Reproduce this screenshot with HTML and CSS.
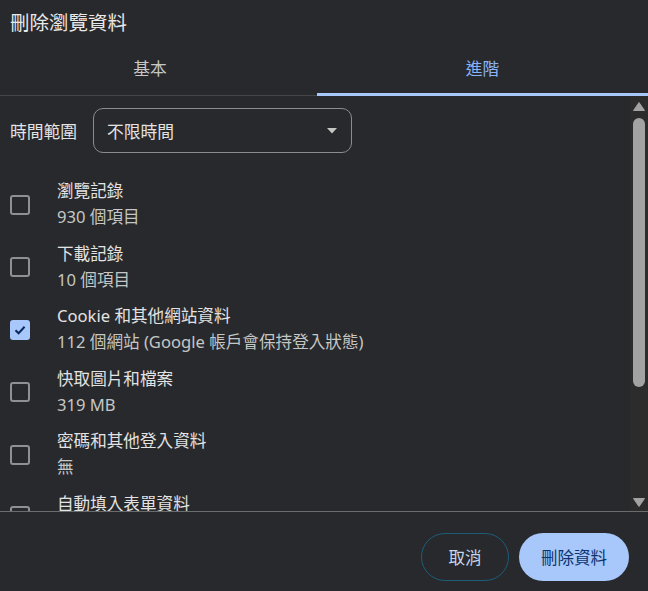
FILE: index.html
```html
<!DOCTYPE html>
<html lang="zh-Hant">
<head>
<meta charset="utf-8">
<link rel="stylesheet" href="styles.css">
</head>
<body>
<div class="dialog">
  <div class="title">刪除瀏覽資料</div>
  <div class="tabs">
    <div class="tab">基本</div>
    <div class="tab active">進階</div>
  </div>
  <div class="body">
    <div class="content">
      <div class="range-row">
        <span class="range-label">時間範圍</span>
        <div class="select">
          <span>不限時間</span>
          <svg class="caret" width="10" height="6" viewBox="0 0 10 6"><path d="M0 0 L10 0 L5 5.5 Z" fill="#c4c7c5"/></svg>
        </div>
      </div>
      <div class="item">
        <span class="box"></span>
        <div class="text"><div class="label">瀏覽記錄</div><div class="sub">930 個項目</div></div>
      </div>
      <div class="item">
        <span class="box"></span>
        <div class="text"><div class="label">下載記錄</div><div class="sub">10 個項目</div></div>
      </div>
      <div class="item">
        <span class="box checked">
          <svg width="14" height="14" viewBox="0 0 14 14"><path d="M2.5 7.2 L5.6 10.2 L11.6 3.8" fill="none" stroke="#0b2a5c" stroke-width="2"/></svg>
        </span>
        <div class="text"><div class="label">Cookie 和其他網站資料</div><div class="sub">112 個網站 (Google 帳戶會保持登入狀態)</div></div>
      </div>
      <div class="item">
        <span class="box"></span>
        <div class="text"><div class="label">快取圖片和檔案</div><div class="sub">319 MB</div></div>
      </div>
      <div class="item">
        <span class="box"></span>
        <div class="text"><div class="label">密碼和其他登入資料</div><div class="sub">無</div></div>
      </div>
      <div class="item last">
        <span class="box"></span>
        <div class="text"><div class="label">自動填入表單資料</div></div>
      </div>
    </div>
    <div class="scrollbar">
      <svg class="arrow" width="12" height="9" viewBox="0 0 12 9"><path d="M6 0.5 L11.5 8.5 L0.5 8.5 Z" fill="#a3a3a3" stroke="#a3a3a3" stroke-linejoin="round"/></svg>
      <div class="thumb"></div>
      <div class="spacer"></div>
      <svg class="arrow" width="12" height="9" viewBox="0 0 12 9"><path d="M0.5 0.5 L11.5 0.5 L6 8.5 Z" fill="#a3a3a3" stroke="#a3a3a3" stroke-linejoin="round"/></svg>
    </div>
  </div>
  <div class="footer">
    <button class="btn cancel">取消</button>
    <button class="btn primary">刪除資料</button>
  </div>
</div>
</body>
</html>
```
FILE: styles.css
```css
* { box-sizing: border-box; }
html, body {
  margin: 0;
  padding: 0;
  background: #28292c;
}
body {
  width: 648px;
  height: 591px;
  overflow: hidden;
  font-family: "Noto Sans", "Noto Sans CJK TC", sans-serif;
  color: #e3e3e3;
}
.dialog {
  width: 648px;
  height: 591px;
  display: flex;
  flex-direction: column;
}
.title {
  height: 45px;
  padding: 9px 0 0 10px;
  font-size: 19.5px;
  line-height: 28px;
  color: #e8e8e8;
}
.tabs {
  display: flex;
  height: 51px;
  border-bottom: 1px solid #444548;
}
.tab {
  flex: 1;
  display: flex;
  align-items: center;
  justify-content: center;
  font-size: 16.75px;
  color: #c7c7c7;
  padding-bottom: 3px;
  border-bottom: 3px solid transparent;
  margin-bottom: -1px;
}
.tab:first-child { flex: 0 0 317px; padding-right: 17px; }
.tab.active {
  color: #8ab4f8;
  border-bottom-color: #a8c7fa;
}
.body {
  display: flex;
  height: 416px;
  border-bottom: 1px solid #6b6c6e;
}
.content {
  flex: 1;
  overflow: hidden;
  padding: 12px 0 0 10px;
}
.range-row {
  display: flex;
  align-items: center;
  gap: 16px;
  height: 45px;
  margin-bottom: 19.75px;
}
.range-label {
  font-size: 16.75px;
  color: #e3e3e3;
}
.select {
  width: 259px;
  height: 45px;
  border: 1px solid #8a8c8e;
  border-radius: 10px;
  display: flex;
  align-items: center;
  justify-content: space-between;
  padding: 0 14px 0 13px;
  font-size: 16.75px;
  color: #e3e3e3;
}
.caret { margin-top: 1px; }
.item {
  display: flex;
  align-items: center;
  height: 62.5px;
  padding: 5.25px 0;
}
.item.last { align-items: flex-start; height: auto; padding-bottom: 0; }
.item.last .box { margin-top: 15px; }
.box {
  flex: 0 0 20px;
  width: 20px;
  height: 20px;
  border: 2px solid #8e9093;
  border-radius: 3px;
  margin-right: 27px;
  margin-top: 1px;
  display: flex;
  align-items: center;
  justify-content: center;
}
.box.checked {
  background: #a8c7fa;
  border-color: #a8c7fa;
}
.text { display: flex; flex-direction: column; }
.label {
  font-size: 16.6px;
  line-height: 26px;
  color: #e3e3e3;
  white-space: nowrap;
}
.item.last .label { line-height: 20px; margin-top: 3px; }
.sub {
  font-size: 16.6px;
  line-height: 26px;
  color: #c4c7c5;
  white-space: nowrap;
}
.scrollbar {
  flex: 0 0 18px;
  background: #2c2c2d;
  display: flex;
  flex-direction: column;
  align-items: center;
  padding: 6px 0 4px;
}
.scrollbar .arrow { flex: 0 0 auto; }
.thumb {
  width: 12px;
  height: 269px;
  margin-top: 7px;
  border-radius: 6px;
  background: #a3a3a3;
}
.spacer { flex: 1; }
.footer {
  flex: 1;
  display: flex;
  justify-content: flex-end;
  align-items: flex-start;
  gap: 10px;
  padding: 21px 19px 0 0;
}
.btn {
  height: 48px;
  border-radius: 24px;
  font-family: "Noto Sans", "Noto Sans CJK TC", sans-serif;
  font-size: 16.5px;
  cursor: pointer;
}
.cancel {
  width: 88px;
  background: transparent;
  border: 1px solid #1d5d78;
  color: #c6d6ea;
}
.primary {
  width: 110px;
  background: #a8c7fa;
  border: none;
  color: #0b3470;
}
```
